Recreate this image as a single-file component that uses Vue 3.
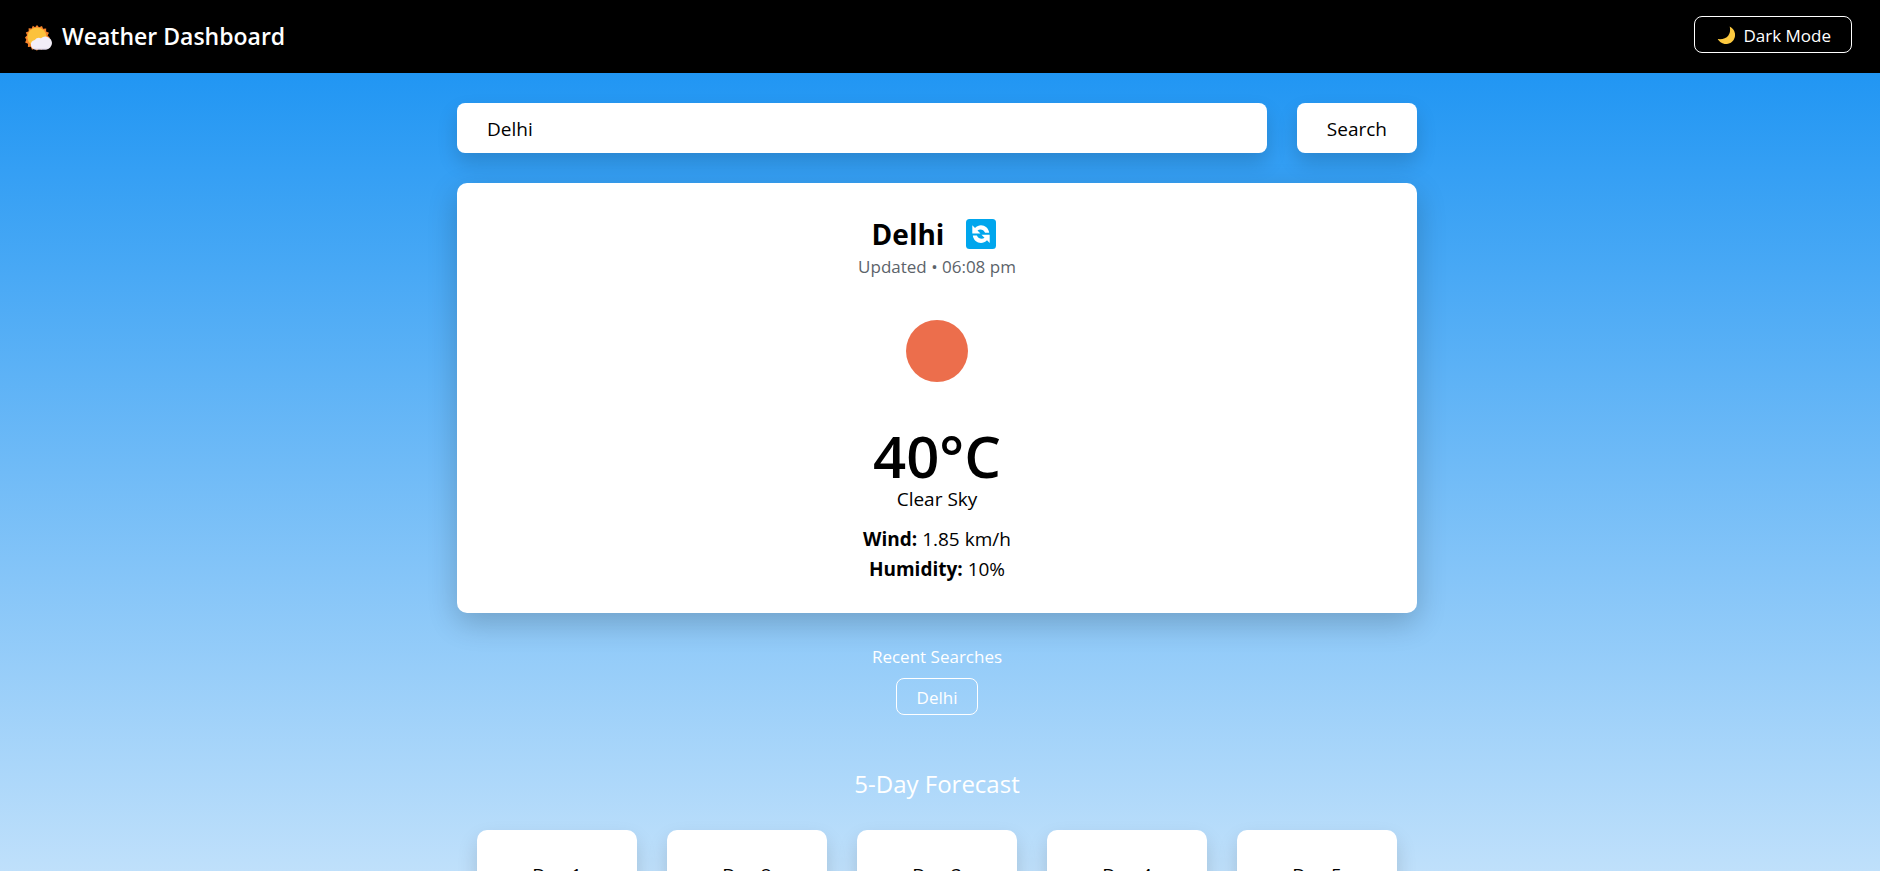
<script setup>
import { ref } from 'vue'

const city = ref('Delhi')
const recent = ['Delhi']
const days = ['Day 1', 'Day 2', 'Day 3', 'Day 4', 'Day 5']
</script>

<template>
  <div class="page">
    <header class="navbar">
      <h1 class="brand">
        <svg class="brand-icon" viewBox="0 0 28 26" aria-hidden="true">
          <path fill="#f8832a" d="M12 0l2 2.2 3-1.3 1.1 2.8 3.1-.2-.1 3.1 2.9 1.2-1.4 2.8 2.2 2.2-2.3 2.1 1.3 2.9-3 1.1.1 3.1-3-.1-1.1 2.9-2.8-1.3-2.1 2.2-2.1-2.3-2.8 1.3-1.1-2.9-3 .1.1-3.1-2.9-1.2L1.300 14.700 0 12.500l2.100-2.200L.8 7.500l2.900-1.200-.1-3 3.100.1L7.800.7l2.300 1.500z" />
          <circle cx="12" cy="12" r="9.600" fill="#fcc23c" />
          <path fill="#f3eef8" d="M10.500 24.500a4.800 4.800 0 0 1-.8-9.500 5.600 5.600 0 0 1 6.300-1.800A6.700 6.700 0 0 1 27 18a6.500 6.500 0 0 1-6.200 6.500z" />
          <path fill="#c9bfd6" d="M7.500 23.800h15.800a6 6 0 0 1-2.500.8H10.500a5 5 0 0 1-3-.8z" />
        </svg>
        <span>Weather Dashboard</span>
      </h1>
      <button class="outline-btn" type="button">
        <svg class="moon" viewBox="0 0 18 18" aria-hidden="true">
          <path fill="#fcc93f" d="M12.700.5a9.200 9.200 0 1 1-12 12.600c4.500.5 8.400-.4 10.500-3.300 1.900-2.600 2.300-5.700 1.500-9.300z" />
        </svg>
        <span>Dark Mode</span>
      </button>
    </header>

    <main class="container">
      <form class="search" @submit.prevent>
        <input v-model="city" class="search-input" type="text" aria-label="City" />
        <button class="search-btn" type="submit">Search</button>
      </form>

      <section class="card current">
        <div class="city-row">
          <h2 class="city">Delhi</h2>
          <button class="refresh" type="button" aria-label="Refresh">
            <svg viewBox="0 0 30 30" aria-hidden="true">
              <rect width="30" height="30" rx="3.500" fill="#00a6ed" />
              <path fill="#fff" d="M6.300 6.300v8.200h8.200l-3-3c2.600-2 6.300-.8 7.600 2.300h4.100C22.300 6.800 14.200 3.700 9 8.900zM23.700 23.900v-8.200h-8.200l3 3c-2.600 2-6.300.8-7.600-2.300H6.800c.9 7 9 10.100 14.200 4.900z" />
            </svg>
          </button>
        </div>
        <p class="updated">Updated • 06:08 pm</p>
        <svg class="sun" viewBox="0 0 126 126" role="img" aria-label="Clear sky">
          <circle cx="63" cy="63" r="31" fill="#ec6e4c" />
        </svg>
        <p class="temp">40°C</p>
        <p class="line">Clear Sky</p>
        <p class="line wind"><strong>Wind:</strong> 1.85 km/h</p>
        <p class="line"><strong>Humidity:</strong> 10%</p>
      </section>

      <section class="recent">
        <h3 class="recent-title">Recent Searches</h3>
        <button v-for="r in recent" :key="r" class="outline-btn" type="button">{{ r }}</button>
      </section>

      <section>
        <h3 class="forecast-title">5-Day Forecast</h3>
        <div class="forecast">
          <article v-for="d in days" :key="d" class="card day">{{ d }}</article>
        </div>
      </section>
    </main>
  </div>
</template>

<style>
body {
  margin: 0;
}
</style>

<style scoped>
.page {
  height: 100vh;
  display: flex;
  flex-direction: column;
  font-family: "Segoe UI", "Open Sans", "Noto Sans", sans-serif;
  font-size: 19px;
  line-height: 30px;
  color: #000;
}
h1, h2, h3, p {
  margin: 0;
  font-weight: 400;
}
button, input, .card {
  font-family: inherit;
  box-sizing: border-box;
}
button {
  cursor: pointer;
}
.navbar {
  display: flex;
  justify-content: space-between;
  align-items: center;
  flex: none;
  padding: 16px 28px 20px 25px;
  background: #000;
  color: #fff;
}
.brand {
  display: flex;
  align-items: center;
  gap: 9px;
  padding-top: 2px;
  font-size: 23px;
  font-weight: 600;
}
.brand-icon {
  width: 28px;
  height: 26px;
  margin-top: 4px;
}
.outline-btn {
  display: inline-flex;
  align-items: center;
  gap: 8px;
  height: 37px;
  padding: 1px 20px 0;
  border: 1px solid #fff;
  border-radius: 8px;
  background: transparent;
  color: #fff;
  font-size: 17px;
}
.moon {
  width: 18px;
  height: 18px;
  margin-left: 2px;
}
.container {
  flex: 1;
  min-height: 0;
  overflow-y: auto;
  scrollbar-width: none;
  padding: 30px 26px 30px 20px;
  background: linear-gradient(#2196f3, #bfe0fb);
}
.container > * {
  max-width: 960px;
  margin-left: auto;
  margin-right: auto;
}
.search {
  display: flex;
  gap: 30px;
}
.search-input, .search-btn {
  height: 50px;
  padding: 1px 30px 0;
  border: 0;
  border-radius: 8px;
  background: #fff;
  color: #000;
  font-size: 19px;
  box-shadow: 0 10px 20px rgba(0, 0, 0, 0.15);
}
.search-input {
  flex: 1;
  min-width: 0;
}
.card {
  background: #fff;
  border-radius: 10px;
  box-shadow: 0 10px 30px rgba(0, 0, 0, 0.2);
}
.current {
  margin-top: 30px;
  padding: 31px 30px 29px;
  text-align: center;
}
.city-row {
  display: flex;
  justify-content: center;
  align-items: center;
  gap: 22px;
  height: 40px;
  padding-right: 6px;
}
.city {
  font-size: 28px;
  font-weight: 700;
}
.refresh {
  display: flex;
  padding: 0;
  border: 0;
  background: none;
}
.refresh svg {
  width: 30px;
  height: 30px;
}
.updated {
  line-height: 26px;
  font-size: 17px;
  color: #5c636a;
}
.sun {
  display: block;
  width: 126px;
  height: 126px;
  margin: 8px auto 14px;
}
.temp {
  font-size: 58px;
  font-weight: 600;
  line-height: 56px;
}
.wind {
  margin-top: 10px;
}
.recent {
  margin-top: 31px;
  text-align: center;
}
.recent-title {
  margin-bottom: 8px;
  font-size: 17px;
  line-height: 26px;
  color: #fff;
}
.forecast-title {
  margin: 54px 0 31px;
  font-size: 24px;
  text-align: center;
  color: #fff;
}
.forecast {
  display: flex;
  gap: 30px;
  padding: 0 20px;
}
.day {
  flex: 1;
  padding: 30px 10px;
  text-align: center;
  box-shadow: 0 10px 20px rgba(0, 0, 0, 0.15);
}
</style>
